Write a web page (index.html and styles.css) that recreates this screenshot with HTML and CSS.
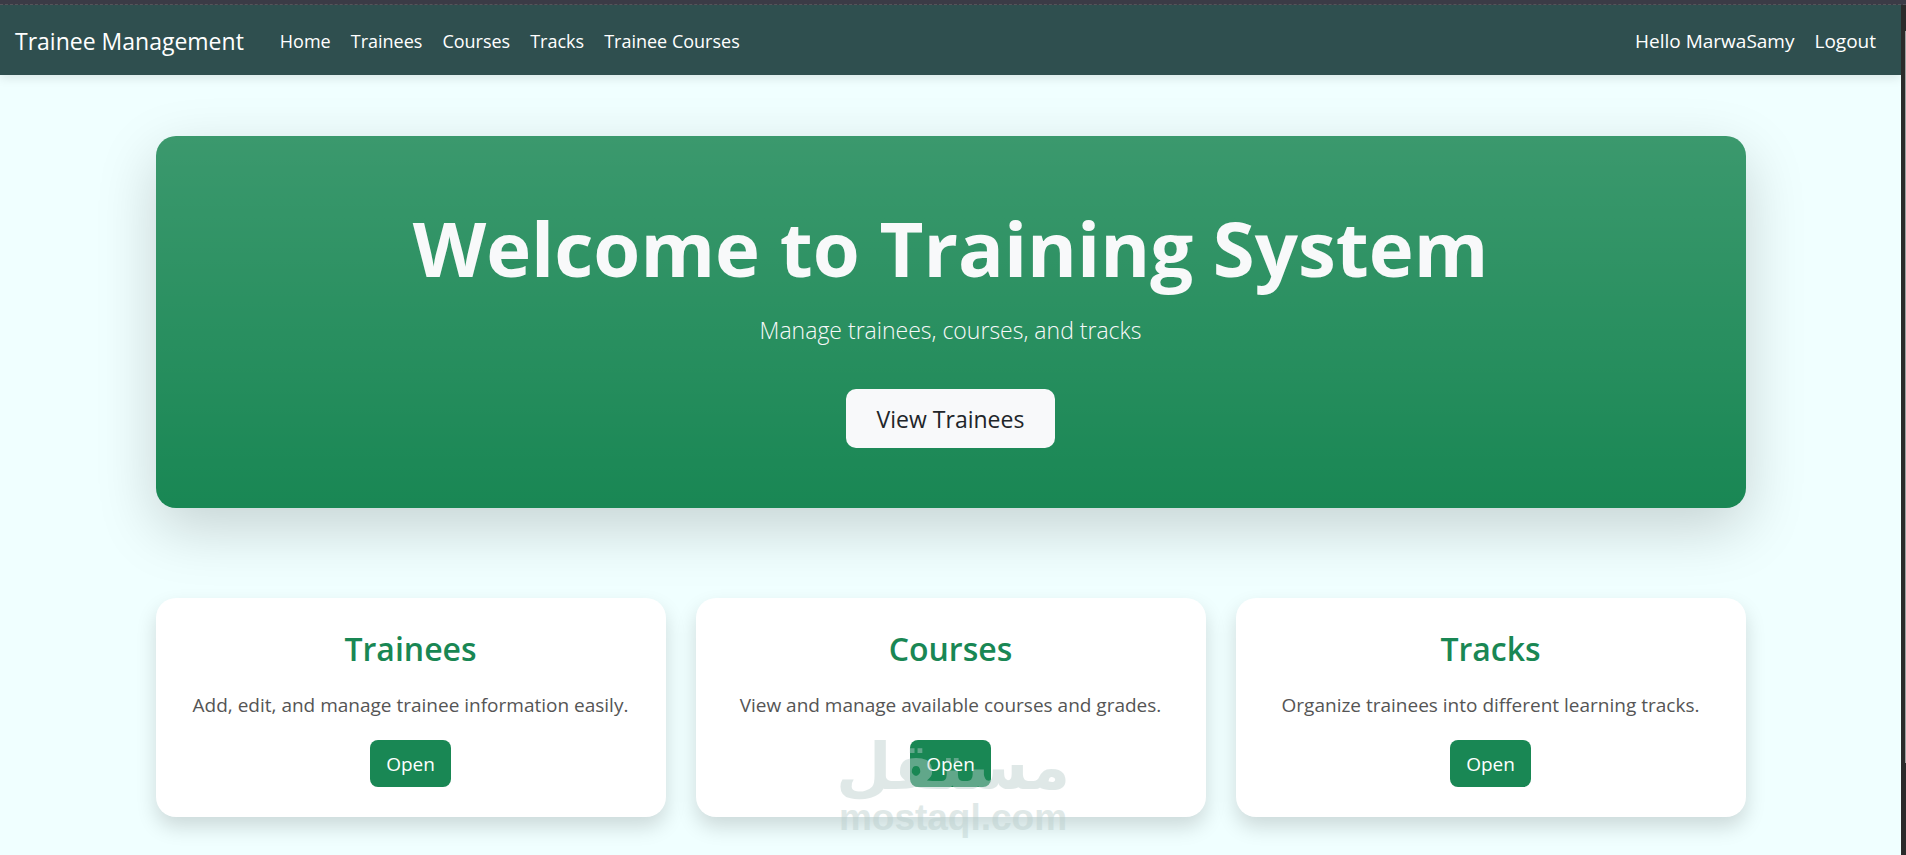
FILE: index.html
```html
<!DOCTYPE html>
<html lang="en">
<head>
    <meta charset="UTF-8">
    <meta name="viewport" content="width=device-width, initial-scale=1.0">
    <title>Trainee Management</title>
    <link rel="stylesheet" href="styles.css">
</head>
<body>
    <div class="top-strip"></div>
    <div class="window">
        <div class="page">
            <nav class="navbar">
                <a class="navbar-brand" href="#">Trainee Management</a>
                <ul class="nav-links">
                    <li><a href="#">Home</a></li>
                    <li><a href="#">Trainees</a></li>
                    <li><a href="#">Courses</a></li>
                    <li><a href="#">Tracks</a></li>
                    <li><a href="#">Trainee Courses</a></li>
                </ul>
                <ul class="nav-links nav-user">
                    <li><a href="#">Hello MarwaSamy</a></li>
                    <li><a href="#">Logout</a></li>
                </ul>
            </nav>

            <main class="container">
                <section class="hero">
                    <h1>Welcome to Training System</h1>
                    <p>Manage trainees, courses, and tracks</p>
                    <a class="btn btn-light" href="#">View Trainees</a>
                </section>

                <section class="cards">
                    <div class="card">
                        <h3>Trainees</h3>
                        <p>Add, edit, and manage trainee information easily.</p>
                        <a class="btn btn-success" href="#">Open</a>
                    </div>
                    <div class="card">
                        <h3>Courses</h3>
                        <p>View and manage available courses and grades.</p>
                        <a class="btn btn-success" href="#">Open</a>
                    </div>
                    <div class="card">
                        <h3>Tracks</h3>
                        <p>Organize trainees into different learning tracks.</p>
                        <a class="btn btn-success" href="#">Open</a>
                    </div>
                </section>
            </main>
        </div>
        <div class="scroll-track">
            <div class="scroll-thumb"></div>
        </div>
    </div>

    <div class="watermark">
        <span class="watermark-ar" lang="ar" dir="rtl">مستقل</span>
        <span class="watermark-en">mostaql.com</span>
    </div>
</body>
</html>
```
FILE: styles.css
```css
* {
    box-sizing: border-box;
}
body {
    margin: 0;
    height: 100vh;
    display: flex;
    flex-direction: column;
    overflow: hidden;
    background-color: #f0ffff;
    color: #212529;
    font-family: "Open Sans", "Noto Sans", sans-serif;
    font-size: 19px;
    line-height: 30px;
}
a {
    text-decoration: none;
}
h1, h3, p, ul {
    margin: 0;
    padding: 0;
}

.top-strip {
    flex: none;
    height: 5px;
    background-color: #3b3b46;
    border-bottom: 1px dashed #55555a;
}
.window {
    flex: 1;
    display: flex;
    min-height: 0;
}
.page {
    flex: 1;
    overflow: hidden;
}
.scroll-track {
    width: 5px;
    padding: 26px 0 92px 4px;
    background-color: #2b2b2b;
}
.scroll-thumb {
    height: 100%;
    background-color: #9f9f9f;
}

/* Navbar */
.navbar {
    display: flex;
    align-items: center;
    height: 70px;
    padding: 2px 15px 0;
    background-color: #2f4f4f;
    box-shadow: 0 3px 10px rgba(0, 0, 0, 0.1);
}
.navbar a {
    color: #fff;
}
.navbar-brand {
    margin-right: 26px;
    font-size: 23px;
}
.nav-links {
    display: flex;
    list-style: none;
    font-size: 18px;
}
.nav-links a {
    display: block;
    padding: 10px;
}
.nav-user {
    margin-left: auto;
    font-size: 19px;
}

/* Content */
.container {
    max-width: 1650px;
    margin: 0 auto;
    padding: 61px 30px 30px;
}
.hero {
    padding: 60px;
    text-align: center;
    color: #f8f9fa;
    background-color: #198754;
    background-image: linear-gradient(180deg, rgba(255, 255, 255, 0.15), rgba(255, 255, 255, 0));
    border-radius: 20px;
    box-shadow: 0 20px 60px rgba(0, 0, 0, 0.175);
}
.hero h1 {
    margin-bottom: 12px;
    font-size: 76px;
    font-weight: 700;
    line-height: 104px;
}
.hero p {
    margin-bottom: 40px;
    font-size: 23px;
    font-weight: 300;
    line-height: 37px;
}
.cards {
    display: grid;
    grid-template-columns: repeat(3, 1fr);
    gap: 30px;
    margin-top: 90px;
}
.card {
    padding: 30px;
    text-align: center;
    background-color: #fff;
    border-radius: 20px;
    box-shadow: 0 10px 20px rgba(0, 0, 0, 0.15);
}
.card h3 {
    margin-bottom: 20px;
    color: #198754;
    font-size: 32px;
    font-weight: 600;
    line-height: 42px;
}
.card p {
    margin-bottom: 20px;
    color: #555;
}

/* Buttons */
.btn {
    display: inline-block;
    vertical-align: top;
}
.btn-light {
    padding: 11px 31px 9px;
    font-size: 23px;
    line-height: 39px;
    color: #212529;
    background-color: #f8f9fa;
    border-radius: 10px;
}
.btn-success {
    padding: 9px 16px 7px;
    line-height: 31px;
    color: #fff;
    background-color: #198754;
    border-radius: 8px;
}

/* Watermark over the page */
.watermark {
    position: absolute;
    left: 50%;
    bottom: 18px;
    transform: translateX(-50%);
    display: flex;
    flex-direction: column;
    align-items: center;
    color: #bacecc;
    opacity: 0.45;
    font-weight: 700;
    pointer-events: none;
}
.watermark-ar {
    font-family: "DejaVu Sans", sans-serif;
    font-size: 64px;
    line-height: 64px;
}
.watermark-en {
    font-family: "Liberation Sans", sans-serif;
    font-size: 37px;
    line-height: 38px;
}
```
